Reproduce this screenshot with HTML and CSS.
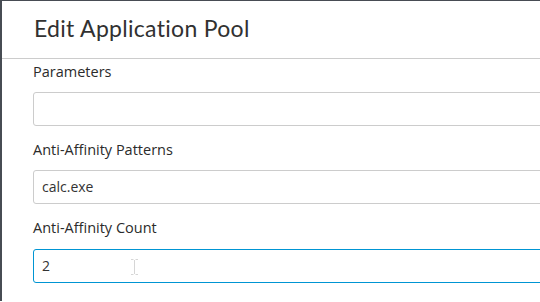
FILE: index.html
```html
<!DOCTYPE html>
<html>
<head>
<meta charset="utf-8">
<link rel="stylesheet" href="styles.css">
</head>
<body>
<div class="modal">
  <div class="modal-header">
    <h3 class="modal-title">Edit Application Pool</h3>
  </div>
  <div class="modal-body">
    <div class="field">
      <label class="field-label">Parameters</label>
      <div class="input"></div>
    </div>
    <div class="field">
      <label class="field-label">Anti-Affinity Patterns</label>
      <div class="input">calc.exe</div>
    </div>
    <div class="field">
      <label class="field-label">Anti-Affinity Count</label>
      <div class="input input-focus">2
        <svg class="ibeam" width="7" height="16" viewBox="0 0 7 16"><path d="M0 0.5H2.5M4.5 0.5H7M3.5 1V15M0 15.5H2.5M4.5 15.5H7" stroke="#d6d6d6" stroke-width="1" fill="none"/></svg>
      </div>
    </div>
  </div>
</div>
</body>
</html>
```
FILE: styles.css
```css
html, body {
  margin: 0;
  padding: 0;
  background: #fff;
  overflow: hidden;
  width: 540px;
  height: 302px;
}
.modal {
  border-left: 2px solid #474c53;
  border-top: 1px solid #474c53;
  height: 301px;
  box-sizing: border-box;
  width: 700px;
}
.modal-header {
  height: 57px;
  border-bottom: 1px solid #cccccc;
  padding-left: 32px;
}
.modal-title {
  margin: 0;
  padding-top: 13px;
  font-family: "Lato", "Open Sans", sans-serif;
  font-weight: 400;
  font-size: 23px;
  letter-spacing: 0.3px;
  line-height: 28px;
  color: #313131;
}
.modal-body {
  padding-left: 31px;
  padding-top: 3px;
  font-family: "Open Sans", sans-serif;
}
.field {
  display: flex;
  flex-direction: column;
}
.field-label {
  font-size: 14.5px;
  font-weight: 400;
  color: #2b2b2b;
  line-height: 20px;
  height: 20px;
  margin-bottom: 10px;
}
.input {
  position: relative;
  height: 34px;
  box-sizing: border-box;
  border: 1px solid #cccccc;
  border-radius: 3px;
  width: 600px;
  padding-left: 8px;
  font-size: 14px;
  line-height: 32px;
  color: #333;
  margin-bottom: 14px;
}
.field:last-child .input {
  margin-top: 1px;
}
.input-focus {
  border-color: #0095d3;
}
.ibeam {
  position: absolute;
  left: 97px;
  top: 9px;
}
```
